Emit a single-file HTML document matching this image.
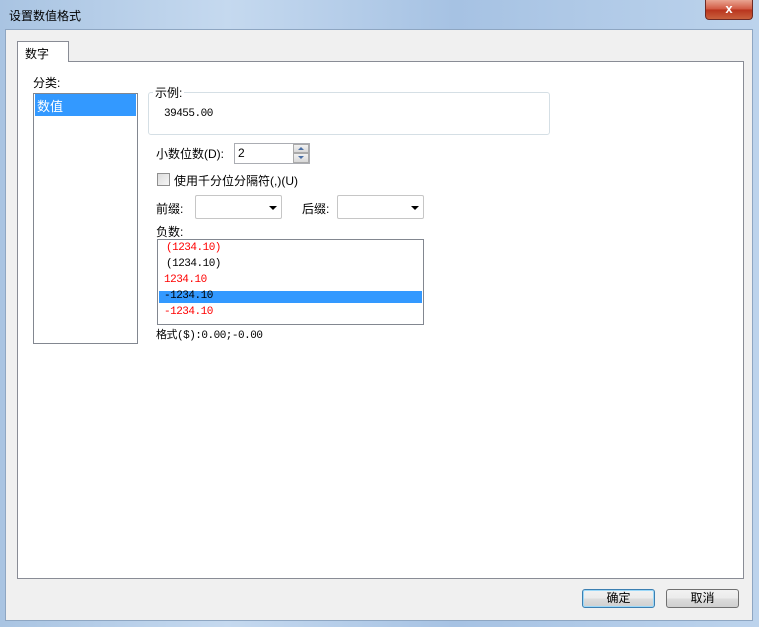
<!DOCTYPE html>
<html><head><meta charset="utf-8"><style>
*{margin:0;padding:0;box-sizing:border-box}
body{width:759px;height:627px;overflow:hidden;font:12px "Liberation Sans","Noto Sans CJK SC",sans-serif;color:#000;position:relative;background:linear-gradient(90deg,#a9c4e2,#c5d9ef 30%,#a6c2e3 60%,#bcd3ec);}
.a{position:absolute}
.client{left:5px;top:29px;width:748px;height:592px;background:#f0f0f0;border:1px solid #8ea6c2}
.mono{font-family:"Liberation Mono","Noto Sans CJK SC",monospace;font-size:11px;line-height:12px;letter-spacing:-0.5px}
.btn{border:1px solid #707070;border-radius:3px;background:linear-gradient(#f2f2f2,#ebebeb 50%,#dddddd 51%,#cfcfcf);text-align:center;line-height:17px;font-size:12px}
.combo{background:#fff;border:1px solid #c6c6c6;border-radius:2px}
.tri{width:0;height:0;border-left:4px solid transparent;border-right:4px solid transparent;border-top:4px solid #000}
</style></head><body>
<div class="a" style="left:9px;top:7px;font-size:12px">设置数值格式</div>
<div class="a" style="left:705px;top:0;width:48px;height:20px;border:1px solid #6d2a25;border-top:none;border-radius:0 0 4px 4px;background:linear-gradient(#e9a592,#d0563f 50%,#b8331d 51%,#c9603d);color:#fff;font-weight:bold;text-align:center;line-height:18px;font-size:13px">x</div>
<div class="a client"></div>
<div class="a" style="left:17px;top:61px;width:727px;height:518px;background:#fff;border:1px solid #898c95"></div>
<div class="a" style="left:17px;top:41px;width:52px;height:21px;background:#fff;border:1px solid #898c95;border-bottom:none;padding:3px 0 0 7px">数字</div>
<div class="a" style="left:33px;top:74px">分类:</div>
<div class="a" style="left:33px;top:93px;width:105px;height:251px;border:1px solid #828790;background:#fff"></div>
<div class="a" style="left:35px;top:94px;width:101px;height:22px;background:#3399ff;color:#fff;padding:2px 0 0 2px;font-size:13px">数值</div>
<div class="a" style="left:148px;top:92px;width:402px;height:43px;border:1px solid #d5dfe5;border-radius:3px"></div>
<div class="a" style="left:153px;top:84px;background:#fff;padding:0 2px">示例:</div>
<div class="a mono" style="left:164px;top:108px">39455.00</div>
<div class="a" style="left:156px;top:145px">小数位数(D):</div>
<div class="a" style="left:234px;top:143px;width:76px;height:21px;background:#fff;border:1px solid #abadb3;padding:2px 0 0 3px">2</div>
<div class="a" style="left:293px;top:144px;width:16px;height:9px;background:linear-gradient(#f2f2f2,#d8d8d8);border:1px solid #aaa"><div class="a" style="left:4px;top:2px;border-left:3px solid transparent;border-right:3px solid transparent;border-bottom:3px solid #4a6fa5"></div></div>
<div class="a" style="left:293px;top:153px;width:16px;height:10px;background:linear-gradient(#f2f2f2,#d8d8d8);border:1px solid #aaa"><div class="a" style="left:4px;top:2px;border-left:3px solid transparent;border-right:3px solid transparent;border-top:3px solid #4a6fa5"></div></div>
<div class="a" style="left:157px;top:173px;width:13px;height:13px;border:1px solid #8f8f8f;background:linear-gradient(135deg,#dcdcdc,#f6f6f6)"></div>
<div class="a" style="left:174px;top:172px">使用千分位分隔符(,)(U)</div>
<div class="a" style="left:156px;top:200px">前缀:</div>
<div class="a combo" style="left:195px;top:195px;width:87px;height:24px"><div class="a tri" style="left:73px;top:10px"></div></div>
<div class="a" style="left:302px;top:200px">后缀:</div>
<div class="a combo" style="left:337px;top:195px;width:87px;height:24px"><div class="a tri" style="left:73px;top:10px"></div></div>
<div class="a" style="left:156px;top:223px">负数:</div>
<div class="a" style="left:157px;top:239px;width:267px;height:86px;border:1px solid #828790;background:#fff"></div>
<div class="a mono" style="left:166px;top:242px;color:#f00">(1234.10)</div>
<div class="a mono" style="left:166px;top:258px">(1234.10)</div>
<div class="a mono" style="left:164px;top:274px;color:#f00">1234.10</div>
<div class="a" style="left:159px;top:291px;width:263px;height:12px;background:#3399ff"></div>
<div class="a mono" style="left:164px;top:290px">-1234.10</div>
<div class="a mono" style="left:164px;top:306px;color:#f00">-1234.10</div>
<div class="a mono" style="left:156px;top:330px">格式($):0.00;-0.00</div>
<div class="a btn" style="left:582px;top:589px;width:73px;height:19px;border-color:#3c7fb1;box-shadow:inset 0 0 0 1px #9cd8f8">确定</div>
<div class="a btn" style="left:666px;top:589px;width:73px;height:19px">取消</div>
</body></html>
